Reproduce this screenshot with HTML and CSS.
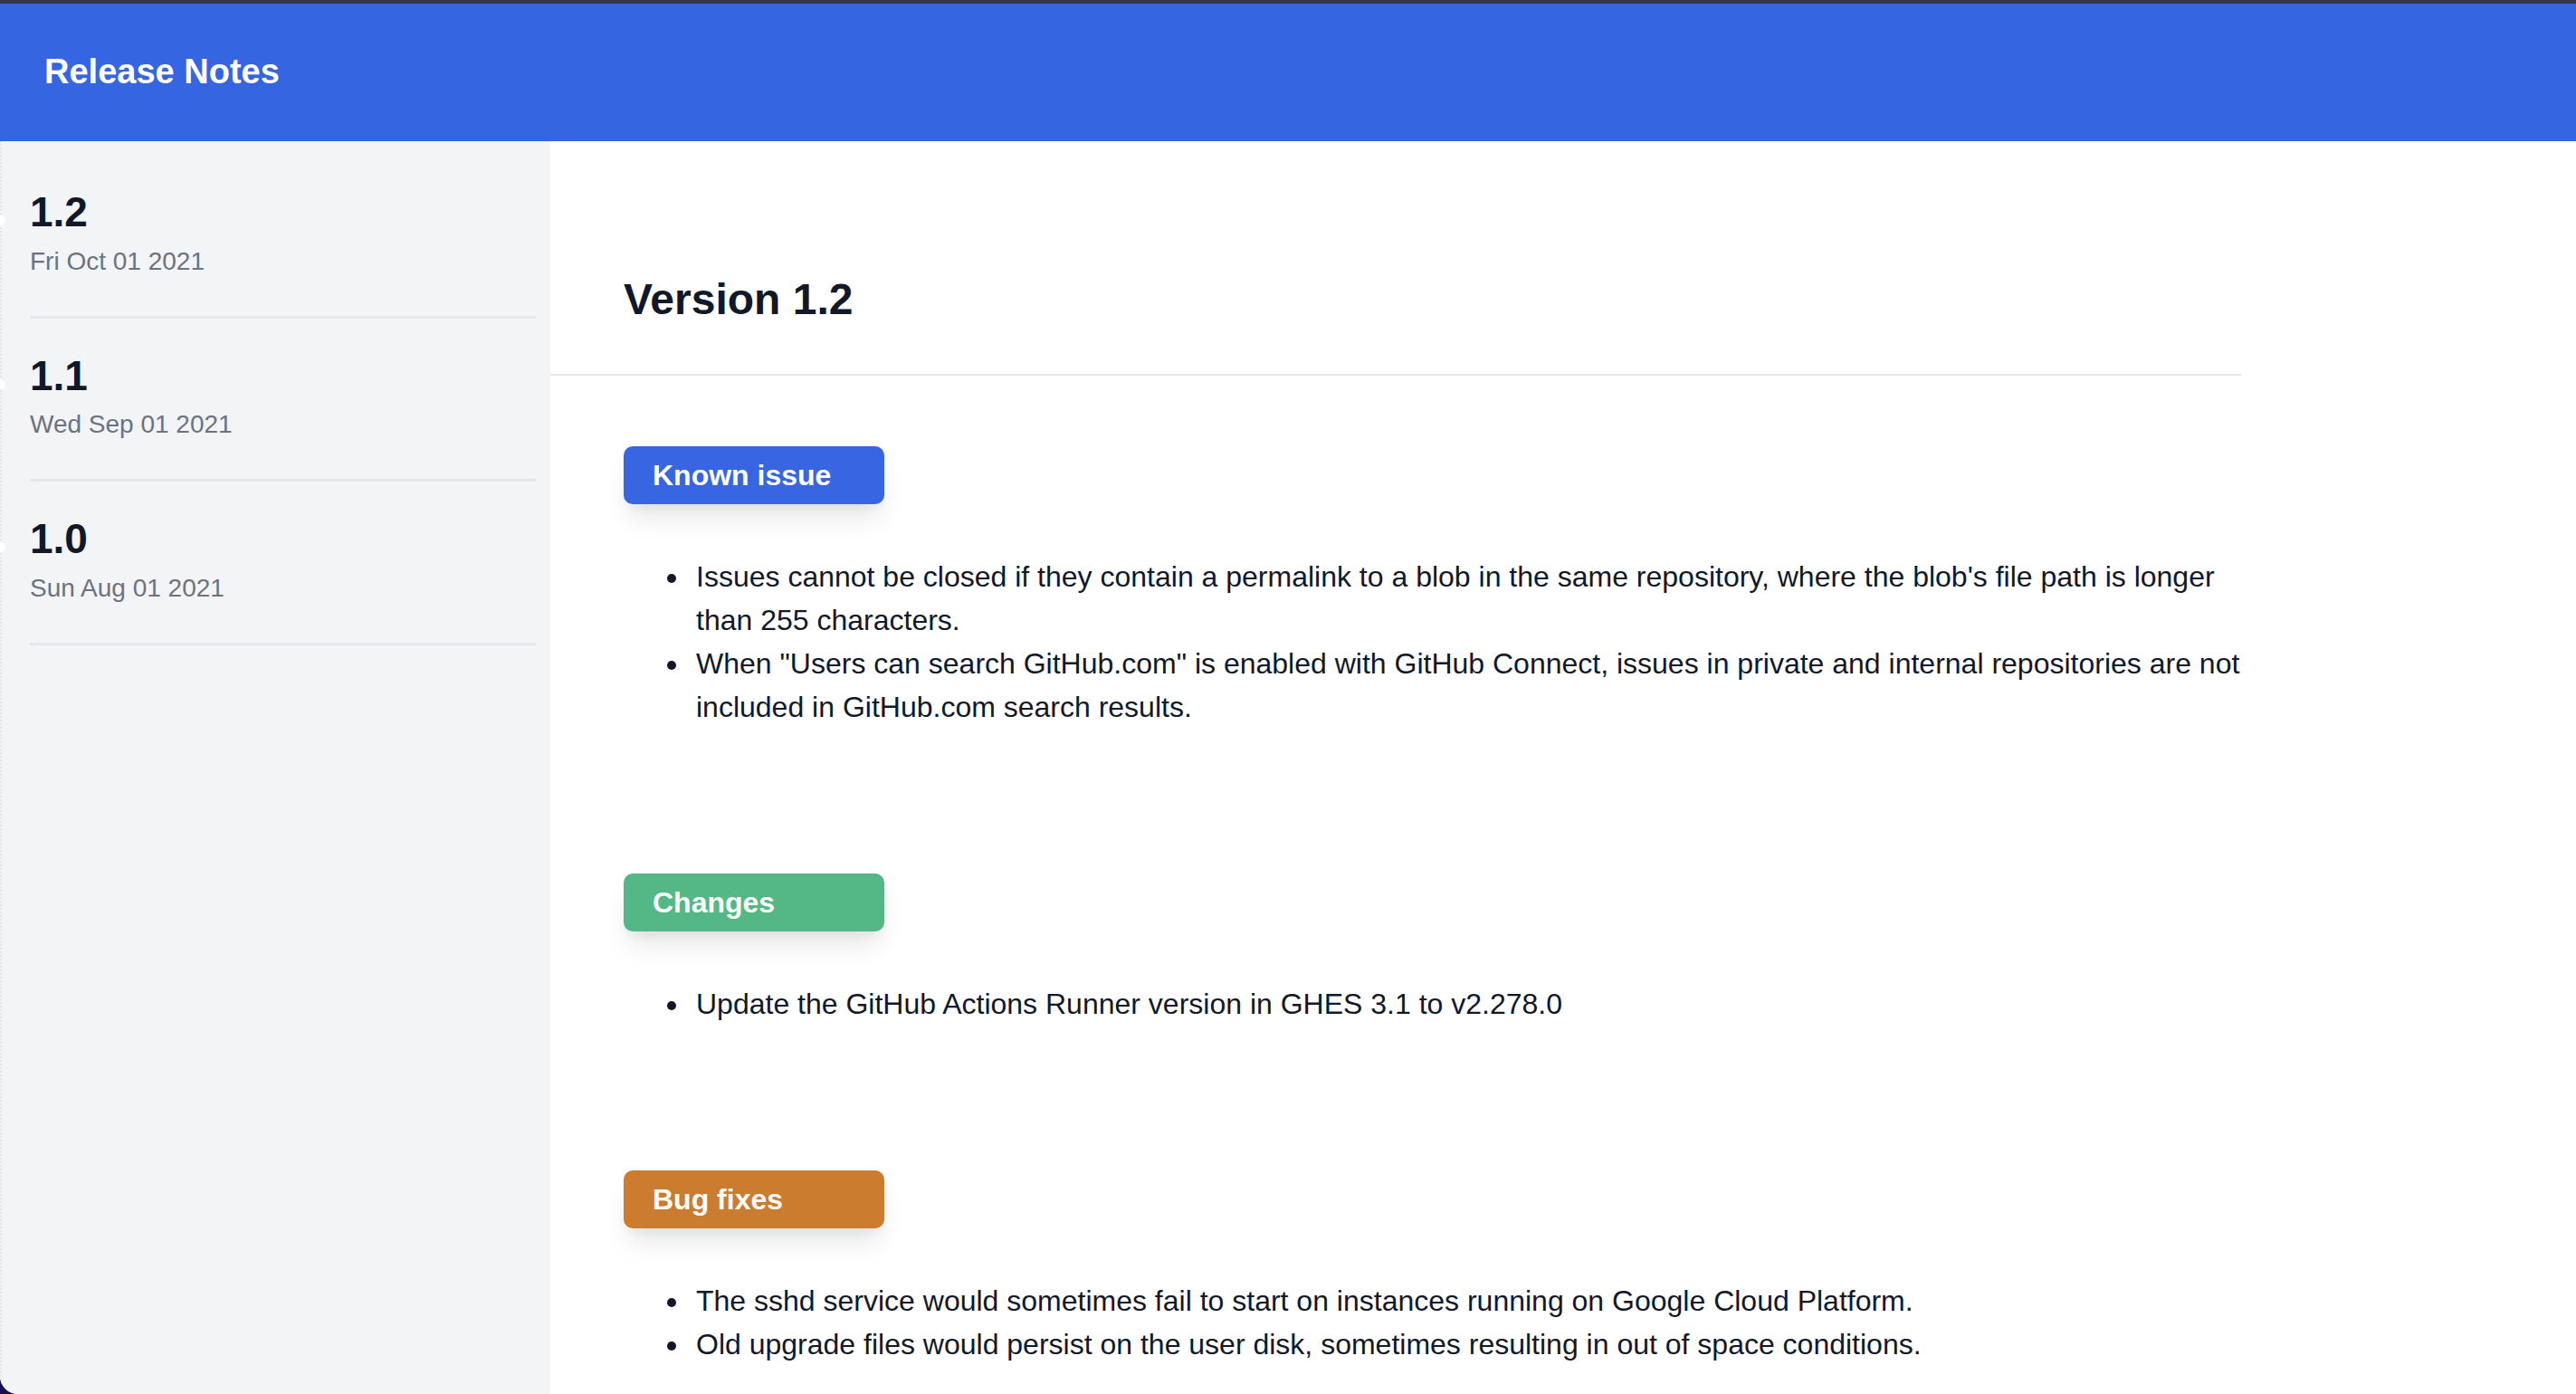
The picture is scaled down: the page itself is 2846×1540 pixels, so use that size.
FILE: index.html
```html
<!DOCTYPE html>
<html lang="en">
<head>
<meta charset="utf-8">
<title>Release Notes</title>
<link rel="stylesheet" href="styles.css">
</head>
<body>
<div class="app">
  <header class="topbar">
    <h1 class="brand">Release Notes</h1>
  </header>
  <div class="body">
    <aside class="sidebar">
      <div class="release">
        <span class="dot"></span>
        <div class="release-version">1.2</div>
        <div class="release-date">Fri Oct 01 2021</div>
      </div>
      <div class="release">
        <span class="dot"></span>
        <div class="release-version">1.1</div>
        <div class="release-date">Wed Sep 01 2021</div>
      </div>
      <div class="release">
        <span class="dot"></span>
        <div class="release-version">1.0</div>
        <div class="release-date">Sun Aug 01 2021</div>
      </div>
    </aside>
    <main class="main">
      <div class="column">
        <div class="title-wrap">
          <h2 class="title">Version 1.2</h2>
        </div>
        <section class="section">
          <div class="badge badge-blue">Known issue</div>
          <ul class="notes">
            <li>Issues cannot be closed if they contain a permalink to a blob in the same repository, where the blob's file path is longer than 255 characters.</li>
            <li>When "Users can search GitHub.com" is enabled with GitHub Connect, issues in private and internal repositories are not included in GitHub.com search results.</li>
          </ul>
        </section>
        <section class="section">
          <div class="badge badge-green">Changes</div>
          <ul class="notes">
            <li>Update the GitHub Actions Runner version in GHES 3.1 to v2.278.0</li>
          </ul>
        </section>
        <section class="section">
          <div class="badge badge-orange">Bug fixes</div>
          <ul class="notes">
            <li>The sshd service would sometimes fail to start on instances running on Google Cloud Platform.</li>
            <li>Old upgrade files would persist on the user disk, sometimes resulting in out of space conditions.</li>
          </ul>
        </section>
      </div>
    </main>
  </div>
</div>
</body>
</html>
```

FILE: styles.css
```css
* {
  box-sizing: border-box;
}

html, body {
  margin: 0;
  padding: 0;
  height: 100%;
}

body {
  background: #1d0c55;
  font-family: "Liberation Sans", Arial, Helvetica, sans-serif;
  color: #111827;
  overflow: hidden;
}

.app {
  height: 1540px;
  display: flex;
  flex-direction: column;
  background: #ffffff;
  border-bottom-left-radius: 20px;
  overflow: hidden;
}

.topbar {
  flex: 0 0 156px;
  display: flex;
  align-items: center;
  padding-left: 49px;
  background: #3665e2;
  border-top: 4px solid #323848;
}

.brand {
  margin: 0;
  font-size: 38px;
  font-weight: 700;
  color: #ffffff;
  line-height: 1.2;
}

.body {
  flex: 1;
  display: flex;
  min-height: 0;
}

.sidebar {
  flex: 0 0 608px;
  background: #f3f4f6;
  padding: 15px 16px 0 31px;
  border-left: 2px dotted #e4e6ea;
}

.release {
  position: relative;
  padding: 35px 0 40px;
  border-bottom: 3px solid #e5e7eb;
}

.dot {
  position: absolute;
  left: -38px;
  top: 67px;
  width: 11px;
  height: 11px;
  border-radius: 50%;
  background: #ffffff;
}

.release-version {
  font-size: 46px;
  font-weight: 700;
  line-height: 1.25;
  color: #111827;
}

.release-date {
  margin-top: 5px;
  font-size: 28px;
  line-height: 40px;
  color: #6b7280;
}

.main {
  flex: 1;
  min-width: 0;
}

.column {
  width: 1868px;
}

.title-wrap {
  padding: 145px 0 52px 81px;
  border-bottom: 2px solid #e5e7eb;
}

.title {
  margin: 0;
  font-size: 48px;
  font-weight: 700;
  line-height: 1.25;
  color: #111827;
}

.section {
  padding-left: 81px;
  margin-top: 78px;
}

.section + .section {
  margin-top: 160px;
}

.badge {
  width: 288px;
  height: 64px;
  display: flex;
  align-items: center;
  padding-left: 32px;
  border-radius: 10px;
  font-size: 32px;
  font-weight: 700;
  color: #ffffff;
  box-shadow: 0 20px 30px -6px rgba(0, 0, 0, 0.1), 0 8px 12px -4px rgba(0, 0, 0, 0.05);
}

.badge-blue {
  background: #3866e3;
}

.badge-green {
  background: #54b886;
}

.badge-orange {
  background: #cc7c2f;
}

.notes {
  margin: 56px -10px 0 0;
  padding-left: 74px;
  list-style: disc outside;
  font-size: 32px;
  line-height: 48px;
  color: #111827;
}

.notes li {
  padding-left: 6px;
}
```
